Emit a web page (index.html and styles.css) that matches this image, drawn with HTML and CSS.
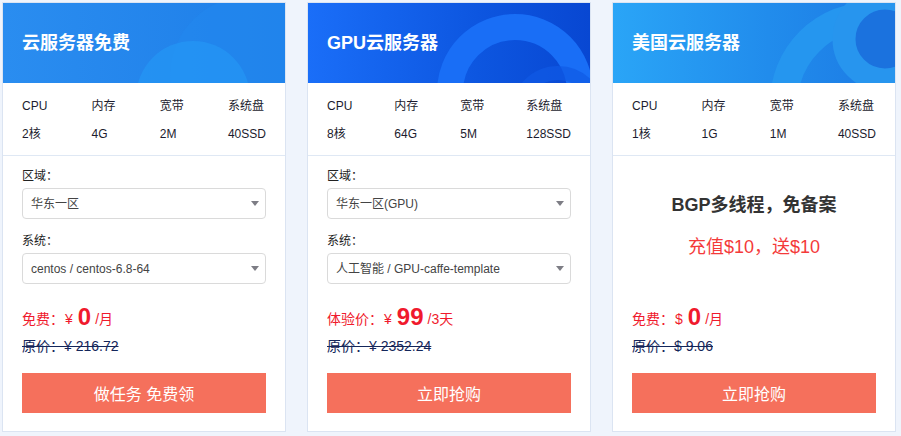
FILE: index.html
```
<!DOCTYPE html>
<html lang="zh-CN">
  <head>
    <meta charset="UTF-8" />
    <title>云服务器</title>
    <link rel="stylesheet" href="styles.css">
  </head>
  <body>
    <div class="plans">
      <!-- 免费云服务器 -->
      <div class="card">
        <div class="card-head head-free">
          <svg class="deco" width="282" height="80" viewBox="0 0 282 80">
            <circle cx="247" cy="73" r="80" fill="#2288ee" opacity="0.55" />
            <circle cx="190" cy="95" r="57" fill="#2496f4" opacity="0.75" />
          </svg>
          <h3>云服务器免费</h3>
        </div>
        <div class="specs">
          <div class="spec"><span>CPU</span><span>2核</span></div>
          <div class="spec"><span>内存</span><span>4G</span></div>
          <div class="spec"><span>宽带</span><span>2M</span></div>
          <div class="spec"><span>系统盘</span><span>40SSD</span></div>
        </div>
        <div class="card-body">
          <div class="options">
            <label class="opt-label">区域：</label>
            <div class="select"><select><option>华东一区</option></select></div>
            <label class="opt-label">系统：</label>
            <div class="select"><select><option>centos / centos-6.8-64</option></select></div>
          </div>
          <div class="price">免费：<span class="cur">¥</span><b>0</b><span class="unit">/月</span></div>
          <div class="orig">原价：¥ 216.72</div>
          <button class="buy">做任务 免费领</button>
        </div>
      </div>

      <!-- GPU云服务器 -->
      <div class="card">
        <div class="card-head head-gpu">
          <svg class="deco" width="282" height="80" viewBox="0 0 282 80">
            <circle cx="207" cy="89" r="65" fill="none" stroke="#196ef6" stroke-width="26" />
            <circle cx="250" cy="110" r="40" fill="none" stroke="#0f5ae6" stroke-width="14" opacity="0.7" />
          </svg>
          <h3>GPU云服务器</h3>
        </div>
        <div class="specs">
          <div class="spec"><span>CPU</span><span>8核</span></div>
          <div class="spec"><span>内存</span><span>64G</span></div>
          <div class="spec"><span>宽带</span><span>5M</span></div>
          <div class="spec"><span>系统盘</span><span>128SSD</span></div>
        </div>
        <div class="card-body">
          <div class="options">
            <label class="opt-label">区域：</label>
            <div class="select"><select><option>华东一区(GPU)</option></select></div>
            <label class="opt-label">系统：</label>
            <div class="select"><select><option>人工智能 / GPU-caffe-template</option></select></div>
          </div>
          <div class="price">体验价：<span class="cur">¥</span><b>99</b><span class="unit">/3天</span></div>
          <div class="orig">原价：¥ 2352.24</div>
          <button class="buy">立即抢购</button>
        </div>
      </div>

      <!-- 美国云服务器 -->
      <div class="card">
        <div class="card-head head-us">
          <svg class="deco" width="282" height="80" viewBox="0 0 282 80">
            <circle cx="258" cy="100" r="87" fill="none" stroke="#2596ef" stroke-width="28" />
            <circle cx="272" cy="36" r="41" fill="#1b72de" stroke="#2795ee" stroke-width="23" />
          </svg>
          <h3>美国云服务器</h3>
        </div>
        <div class="specs">
          <div class="spec"><span>CPU</span><span>1核</span></div>
          <div class="spec"><span>内存</span><span>1G</span></div>
          <div class="spec"><span>宽带</span><span>1M</span></div>
          <div class="spec"><span>系统盘</span><span>40SSD</span></div>
        </div>
        <div class="card-body">
          <div class="promo">
            <p class="promo-title">BGP多线程，免备案</p>
            <p class="promo-gift">充值$10，送$10</p>
          </div>
          <div class="price">免费：<span class="cur">$</span><b>0</b><span class="unit">/月</span></div>
          <div class="orig">原价：$ 9.06</div>
          <button class="buy">立即抢购</button>
        </div>
      </div>
    </div>
  </body>
</html>
```

FILE: styles.css
```
body {
  margin: 0;
  padding: 2px;
  background: #eff4fc;
  font-family: "Liberation Sans", "Noto Sans CJK SC", sans-serif;
  color: #222;
}

.plans {
  display: flex;
  gap: 21px;
}

.card {
  width: 282px;
  height: 428px;
  background: #fff;
  border: 1px solid #dbe4f2;
  display: flex;
  flex-direction: column;
}

.card-head {
  position: relative;
  height: 80px;
  overflow: hidden;
}

.card-head .deco {
  position: absolute;
  left: 0;
  top: 0;
}

.card-head h3 {
  position: relative;
  margin: 0;
  padding-left: 19px;
  line-height: 80px;
  font-size: 18px;
  font-weight: bold;
  color: #fff;
}

.head-free {
  background: linear-gradient(90deg, #2a8df0, #1e7ee8);
}

.head-gpu {
  background: linear-gradient(90deg, #1a6ef8, #0d56e0 60%, #0847d2);
}

.head-us {
  background: linear-gradient(90deg, #2aa5f7, #218cec 55%, #1c7ae4);
}

.specs {
  display: flex;
  justify-content: space-between;
  padding: 9px 19px 7px;
  border-bottom: 1px solid #dfe8f4;
  font-size: 12px;
}

.spec {
  display: flex;
  flex-direction: column;
  line-height: 28px;
  color: #1c1c2e;
}

.card-body {
  flex: 1;
  display: flex;
  flex-direction: column;
  padding: 10px 19px 18px;
}

.options {
  flex: 1;
}

.opt-label {
  display: block;
  font-size: 12px;
  line-height: 20px;
  color: #222;
  margin-bottom: 2px;
}

.select {
  position: relative;
  height: 31px;
  margin-bottom: 12px;
}

.select select {
  width: 100%;
  height: 31px;
  padding: 0 24px 0 8px;
  border: 1px solid #dadada;
  border-radius: 4px;
  background: #fff;
  font-family: inherit;
  font-size: 12px;
  color: #444;
  appearance: none;
  -webkit-appearance: none;
  outline: none;
}

.select::after {
  content: "";
  position: absolute;
  right: 7px;
  top: 13px;
  border-left: 4px solid transparent;
  border-right: 4px solid transparent;
  border-top: 5px solid #7d7d85;
}

.promo {
  flex: 1;
  text-align: center;
  padding-top: 25px;
}

.promo p {
  margin: 0;
  font-size: 18px;
  line-height: 28px;
}

.promo-title {
  font-weight: bold;
  color: #333;
}

.promo .promo-gift {
  margin-top: 14px;
  color: #f43a3a;
}

.price {
  font-size: 14px;
  line-height: 30px;
  color: #f01a2d;
  margin-bottom: 2px;
}

.price .cur {
  margin-left: 1px;
}

.price b {
  font-size: 24px;
  margin: 0 4px 0 5px;
  vertical-align: -1px;
}

.orig {
  font-size: 14px;
  line-height: 20px;
  color: #14265a;
  text-decoration: line-through;
  margin-bottom: 17px;
}

.buy {
  height: 40px;
  border: none;
  background-color: #f5705c;
  color: #fff;
  font-family: inherit;
  font-size: 16px;
  cursor: pointer;
}

.buy:hover {
  background-color: #f25f49;
}
```
